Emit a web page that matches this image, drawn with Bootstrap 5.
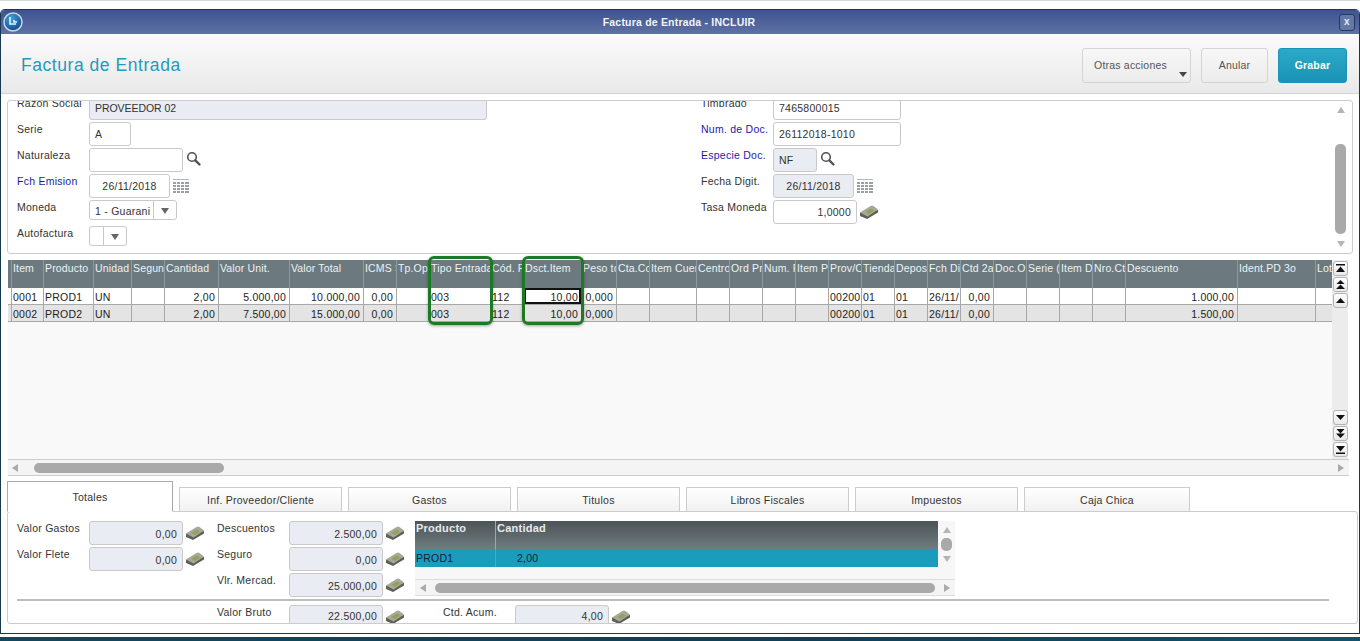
<!DOCTYPE html>
<html lang="es">
<head>
<meta charset="utf-8">
<title>Factura de Entrada</title>
<link href="https://cdn.jsdelivr.net/npm/bootstrap@5.3.0/dist/css/bootstrap.min.css" rel="stylesheet">
<style>
html,body{height:641px;overflow:hidden;background:#fff;margin:0}
body{font:10.5px/14px "Liberation Sans",Arial,sans-serif;color:#333;letter-spacing:.25px}
.topline{height:9px;background:#fff;border-top:1px solid #d4d9dc}
.win{height:625px;border:1px solid #16394f;border-top:1px solid #24364f;border-radius:5px 5px 0 0;overflow:hidden;background:#fff}
.ttl{height:24px;background:linear-gradient(#3d5290,#5f72a5);color:#f1f3f8;font-weight:700;font-size:10.5px;letter-spacing:.2px;padding:0 4px 0 2px}
.ttl-t{flex:1;text-align:center;padding-right:4px}
.xbtn{width:16px;height:17px;background:#6478a8;border:1px solid #26365c;border-radius:3px;color:#e8ebf2;font-size:10px;line-height:14px;text-align:center;font-weight:700}
.hdr{height:60px;background:linear-gradient(#fbfbfb,#e9e9e9);border-bottom:1px solid #d2d2d2;padding:14px 12px 0 20px}
.hdr-t{font-size:17.5px;line-height:35px;color:#1f9bbb;letter-spacing:.55px}
.hbtn{height:35px;font-size:10.5px;line-height:14px;padding:0 0 2px;color:#555;background:linear-gradient(#f7f7f7,#ececec);border:1px solid #d4d4d4;border-radius:3px;letter-spacing:.2px}
.hb1{width:109px;position:relative;padding-right:12px}
.hb1 i{position:absolute;right:3px;bottom:5px;border:4.5px solid transparent;border-top:5px solid #444;border-bottom:0}
.hb2{width:67px;margin-left:10px}
.hb3{width:69px;margin-left:10px;background:linear-gradient(#2ba9c8,#1a93b5);border-color:#1a93b5;color:#fff;font-weight:700}
.frm{height:154px;margin:6px 6px 0;border:1px solid #ccc;border-radius:3px;overflow:hidden}
.frm-in{flex:1;margin-top:-5px;padding-left:9px}
.fcol{width:684px;flex:none}
.fcol2{width:auto;flex:1}
.fr{height:26px}
.flb{width:72px;flex:none;white-space:nowrap}
.flb-b{color:#1c1ca8}
.bx.form-control{height:24px;min-height:0;padding:4px 5px 0;font-size:10.5px;line-height:14px;border:1px solid #c9c9c9;border-radius:3px;color:#333;background:#fff;white-space:nowrap}
.bx-d.form-control{background:#e9ecf2}
.bx-r{text-align:right}
.bx-c{text-align:center}
.w398{width:398px}.w42{width:42px}.w94{width:94px}.w81{width:81px}.w128{width:128px}.w44{width:44px}.w84{width:84px}
.caps{letter-spacing:-.05px}
.cmb{height:20px;border:1px solid #c9c9c9;border-radius:3px;align-items:stretch}
.cmb b{font-weight:400;width:64px;padding:3px 0 0 5px;white-space:nowrap;border-right:1px solid #c9c9c9}
.cmb-e b{width:14px;padding:0}
.cmb i{width:22px;position:relative;flex:none}
.cmb i::after{content:"";position:absolute;left:7px;top:7px;border:4px solid transparent;border-top:6px solid #666;border-bottom:0}
.ic{flex:none;margin-left:3px;display:block}
.ic-s{margin-top:3px}
.ic-m{margin-top:5px}
.ic-c{margin-top:5px}
.vs{width:11px;flex:none;margin-right:6px;padding:6px 0}
.up,.dn{width:0;height:0;border:4.5px solid transparent;flex:none}
.up{border-bottom:6px solid #b5b5b5;border-top:0}
.dn{border-top:6px solid #b5b5b5;border-bottom:0}
.th{width:11px;background:#a9a9a9;border-radius:5px}
.vs .th{flex:1;margin:31px 0 7px}
.grid{height:216px;margin:6px 0 0 7px;position:relative;flex:none}
.gwrap{width:1324px;overflow:hidden;background:#f9f9f9;height:199px}
table.gt{table-layout:fixed;width:1340px;margin:0;border-collapse:separate;border-spacing:0;font-size:10.5px;--bs-table-bg:transparent}
.gt.gt>*>tr>*{padding:0 0 0 1px;box-shadow:none;overflow:hidden;white-space:nowrap;border:0;border-right:1px solid #a8a8a8;border-bottom:1px solid #a8a8a8;line-height:14px;color:#222;background:#fff}
.gt.gt>thead>tr>th{height:28px;background:#6c7a80;color:#eef2f3;font-weight:400;letter-spacing:.15px;vertical-align:top;padding-top:1px;border-right:1px solid #8d999e;border-bottom:0}
.gt.gt>tbody>tr>td{height:17px;vertical-align:top;padding-top:2px}
.gt.gt>tbody>tr:nth-child(2)>td{background:#e4e4e4}
.gt.gt>tbody>tr>td.rt{text-align:right;padding:2px 3px 0 0}
.gt.gt>tbody>tr>td.sel{box-shadow:inset 0 0 0 2px #111;background:#fff}
.gvs{width:16px;background:#ececec;flex:none;height:199px;padding:1px}
.vb{display:block;width:15px;height:15px;padding:0;border:1px solid #b4b4b4;border-radius:3px;background:linear-gradient(#fff,#e8e8e8);margin-bottom:1px;line-height:0;flex:none}
.vb svg{display:block;margin:2px}
.ghs{height:17px;background:#f4f4f4;border-top:1px solid #ccc;border-bottom:1px solid #ccc;width:1341px;padding-left:4px}
.lf{border:4px solid transparent;border-right:6px solid #aaa;border-left:0}
.rg{border:4px solid transparent;border-left:6px solid #aaa;border-right:0}
.hth{height:10px;background:#a9a9a9;border-radius:5px}
.ghs .hth{width:190px;margin-left:16px}
.ghs .rg{margin:0 5px 0 auto}
.tabs{margin:5px 0 -1px 6px;height:31px;align-items:flex-end;position:relative;z-index:1;flex-wrap:nowrap}
.tabx{height:25px;width:163px;margin-right:6px;border:1px solid #ccc;background:linear-gradient(#fff,#f1f1f1);text-align:center;line-height:24px;color:#333;flex:none}
.tabx-a{height:31px;width:166px;border-color:#aaa;border-bottom-color:#fff;background:#fff;line-height:31px}
.tabx-l{width:166px}
.pan{height:113px;margin:0 1px 0 6px;border:1px solid #ccc;border-radius:3px;padding:9px 9px 0;overflow:hidden}
.tc{width:200px;flex:none}
.tc2{width:198px;flex:none}
.tr{height:26px}
.bx-t.form-control{width:94px;flex:none;padding-top:5px}
.bl .bx-t.form-control{padding-top:3px}
.mini{width:540px;height:75px;flex:none}
.mini-g{width:523px;height:58px;background:#f7f7f7}
.mh{height:28px;background:linear-gradient(#4d5356,#6e7c80);color:#e6e9ea;font-weight:700;font-size:11px}
.mh div,.mr div{padding-left:1px}
.mc1{width:81px;border-right:1px solid #9aa;flex:none}
.mr{height:18px;background:#1c9cbd;color:#123;line-height:18px}
.mr .mc1{border-right:1px solid #3fb0cb}
.mr .mv{padding-left:21px}
.mhs{height:17px;background:#f4f4f4;border-top:1px solid #ddd;border-bottom:1px solid #ddd;width:540px;padding:0 5px}
.mhs .hth{flex:1;margin:0 9px}
.mvs{width:17px;flex:none;padding:6px 3px 0;background:#f7f7f7;height:58px}
.mvs .th{height:13px;margin:5px 0;width:11px}
.sep{height:2px;background:#bdbdbd;margin:0 19px 4px 0}
.ctd{width:72px;flex:none;white-space:nowrap}
.bl{margin-left:200px}
.brk{margin-left:39px}
.frame{position:absolute;width:65px;height:69px;top:-4px;border:3px solid #1c7a24;border-radius:6px;box-shadow:0 1px 3px rgba(0,0,0,.35);pointer-events:none}
.f1{left:420px}.f2{left:514px;width:62px}
.dk{height:4px;margin-top:3px;background:linear-gradient(90deg,#12475e,#0e3f58 60%,#15516a)}
</style>
</head>
<body>
<svg width="0" height="0" class="position-absolute">
<symbol id="s" viewBox="0 0 16 16"><circle cx="6" cy="6" r="4.300" fill="none" stroke="#4d545a" stroke-width="1.600"/><path d="M9.300 9.300l4.200 4.200" stroke="#4d545a" stroke-width="2.400" stroke-linecap="round"/></symbol>
<symbol id="c" viewBox="0 0 16 14"><path d="M0 0h16v1H0z" fill="#b4b8bc"/><g fill="#9aa0a6"><path d="M0 3h3v2H0zM4 3h3v2H4zM8 3h3v2H8zM12 3h4v2h-4zM0 6h3v2H0zM4 6h3v2H4zM8 6h3v2H8zM12 6h4v2h-4zM0 9h3v2H0zM4 9h3v2H4zM8 9h3v2H8zM12 9h4v2h-4zM0 12h3v2H0zM4 12h3v2H4zM8 12h3v2H8zM12 12h4v2h-4z"/></g></symbol>
<symbol id="m" viewBox="0 0 18 14"><path d="M0 7.500V11l7 3 11-6.500V5z" fill="#5f5f55"/><path d="M0 7.500L10.500 1q1.500-1 3 0L18 4.500 7.500 11.500z" fill="#a9a898"/><path d="M5.500 7L10.500 3.500l3.500 2L9 9z" fill="#8fa25c"/></symbol>
</svg>
<div class="topline"></div>
<div class="win d-flex flex-column">
  <div class="ttl d-flex align-items-center">
    <svg width="20" height="20" viewBox="0 0 20 20"><defs><radialGradient id="gl" cx=".4" cy=".3" r=".8"><stop offset="0" stop-color="#3ea3dc"/><stop offset="1" stop-color="#0b3f7e"/></radialGradient></defs><circle cx="10" cy="10" r="9" fill="url(#gl)" stroke="#c7d6e6" stroke-width="1.500"/><path d="M7 5v7h6M11 8v2h3" stroke="#e6f2fb" stroke-width="1.600" fill="none"/></svg>
    <div class="ttl-t">Factura de Entrada - INCLUIR</div>
    <div class="xbtn">x</div>
  </div>
  <div class="hdr d-flex align-items-start">
    <div class="hdr-t flex-grow-1">Factura de Entrada</div>
    <button type="button" class="btn hbtn hb1">Otras acciones<i></i></button>
    <button type="button" class="btn hbtn hb2">Anular</button>
    <button type="button" class="btn hbtn hb3">Grabar</button>
  </div>
  <div class="frm d-flex">
    <div class="frm-in d-flex">
      <div class="fcol">
        <div class="fr d-flex"><div class="flb">Razon Social</div><div class="form-control bx bx-d w398 caps">PROVEEDOR 02</div></div>
        <div class="fr d-flex"><div class="flb">Serie</div><div class="form-control bx w42">A</div></div>
        <div class="fr d-flex"><div class="flb">Naturaleza</div><div class="form-control bx w94"></div><svg class="ic ic-s" width="16" height="16"><use href="#s"/></svg></div>
        <div class="fr d-flex"><div class="flb flb-b">Fch Emision</div><div class="form-control bx bx-c w81">26/11/2018</div><svg class="ic ic-c" width="16" height="14"><use href="#c"/></svg></div>
        <div class="fr d-flex"><div class="flb">Moneda</div><div class="cmb d-flex"><b>1 - Guarani</b><i></i></div></div>
        <div class="fr d-flex"><div class="flb">Autofactura</div><div class="cmb cmb-e d-flex"><b></b><i></i></div></div>
      </div>
      <div class="fcol fcol2">
        <div class="fr d-flex"><div class="flb">Timbrado</div><div class="form-control bx w128">7465800015</div></div>
        <div class="fr d-flex"><div class="flb flb-b">Num. de Doc.</div><div class="form-control bx w128">26112018-1010</div></div>
        <div class="fr d-flex"><div class="flb flb-b">Especie Doc.</div><div class="form-control bx bx-d w44">NF</div><svg class="ic ic-s" width="16" height="16"><use href="#s"/></svg></div>
        <div class="fr d-flex"><div class="flb">Fecha Digit.</div><div class="form-control bx bx-d bx-c w81">26/11/2018</div><svg class="ic ic-c" width="16" height="14"><use href="#c"/></svg></div>
        <div class="fr d-flex"><div class="flb">Tasa Moneda</div><div class="form-control bx bx-r w84">1,0000</div><svg class="ic ic-m" width="18" height="14"><use href="#m"/></svg></div>
      </div>
    </div>
    <div class="vs d-flex flex-column align-items-center">
      <div class="up"></div><div class="th"></div><div class="dn"></div>
    </div>
  </div>
  <div class="grid">
    <div class="d-flex">
      <div class="gwrap">
        <table class="table gt">
          <colgroup><col width="4"><col width="32"><col width="50"><col width="38"><col width="33"><col width="54"><col width="71"><col width="74"><col width="33"><col width="33"><col width="61"><col width="33"><col width="58"><col width="35"><col width="33"><col width="47"><col width="33"><col width="33"><col width="33"><col width="33"><col width="33"><col width="33"><col width="33"><col width="33"><col width="33"><col width="33"><col width="33"><col width="33"><col width="33"><col width="112"><col width="78"><col width="32"></colgroup>
          <thead><tr><th></th><th>Item</th><th>Producto</th><th>Unidad</th><th>Segun</th><th>Cantidad</th><th>Valor Unit.</th><th>Valor Total</th><th>ICMS S</th><th>Tp.Op</th><th>Tipo Entrada</th><th>Cód. F</th><th>Dsct.Item</th><th>Peso to</th><th>Cta.Co</th><th>Item Cuen</th><th>Centro</th><th>Ord Pr</th><th>Num. F</th><th>Item Pe</th><th>Prov/C</th><th>Tienda</th><th>Depos</th><th>Fch Di</th><th>Ctd 2a</th><th>Doc.O</th><th>Serie (</th><th>Item De</th><th>Nro.Ct</th><th>Descuento</th><th>Ident.PD 3o</th><th>Lot</th></tr></thead>
          <tbody>
            <tr><td></td><td>0001</td><td>PROD1</td><td>UN</td><td></td><td class="rt">2,00</td><td class="rt">5.000,00</td><td class="rt">10.000,00</td><td class="rt">0,00</td><td></td><td>003</td><td>112</td><td class="rt sel">10,00</td><td class="rt">0,000</td><td></td><td></td><td></td><td></td><td></td><td></td><td>00200</td><td>01</td><td>01</td><td>26/11/</td><td class="rt">0,00</td><td></td><td></td><td></td><td></td><td class="rt">1.000,00</td><td></td><td></td></tr>
            <tr><td></td><td>0002</td><td>PROD2</td><td>UN</td><td></td><td class="rt">2,00</td><td class="rt">7.500,00</td><td class="rt">15.000,00</td><td class="rt">0,00</td><td></td><td>003</td><td>112</td><td class="rt">10,00</td><td class="rt">0,000</td><td></td><td></td><td></td><td></td><td></td><td></td><td>00200</td><td>01</td><td>01</td><td>26/11/</td><td class="rt">0,00</td><td></td><td></td><td></td><td></td><td class="rt">1.500,00</td><td></td><td></td></tr>
          </tbody>
        </table>
      </div>
      <div class="gvs d-flex flex-column">
        <button type="button" class="vb" aria-label="Inicio"><svg width="9" height="9" viewBox="0 0 9 9"><path d="M0 0h9v1.500H0zM4.500 2.500L9 8H0z" fill="#111"/></svg></button>
        <button type="button" class="vb" aria-label="Pagina arriba"><svg width="9" height="9" viewBox="0 0 9 9"><path d="M4.500 0L8.500 4H.5zM4.500 4.500L9 9H0z" fill="#111"/></svg></button>
        <button type="button" class="vb" aria-label="Arriba"><svg width="9" height="9" viewBox="0 0 9 9"><path d="M4.500 2L9 7H0z" fill="#111"/></svg></button>
        <div class="flex-grow-1"></div>
        <button type="button" class="vb" aria-label="Abajo"><svg width="9" height="9" viewBox="0 0 9 9"><path d="M4.500 7L9 2H0z" fill="#111"/></svg></button>
        <button type="button" class="vb" aria-label="Pagina abajo"><svg width="9" height="9" viewBox="0 0 9 9"><path d="M4.500 4.500L.5 0h8zM4.500 9L0 4.500h9z" fill="#111"/></svg></button>
        <button type="button" class="vb" aria-label="Fin"><svg width="9" height="9" viewBox="0 0 9 9"><path d="M4.500 6.500L0 1h9zM0 7.500h9V9H0z" fill="#111"/></svg></button>
      </div>
    </div>
    <div class="ghs d-flex align-items-center"><div class="lf"></div><div class="hth"></div><div class="rg"></div></div>
    <div class="frame f1"></div>
    <div class="frame f2"></div>
  </div>
  <div class="nav tabs">
    <div class="tabx tabx-a">Totales</div>
    <div class="tabx">Inf. Proveedor/Cliente</div>
    <div class="tabx">Gastos</div>
    <div class="tabx">Titulos</div>
    <div class="tabx">Libros Fiscales</div>
    <div class="tabx">Impuestos</div>
    <div class="tabx tabx-l">Caja Chica</div>
  </div>
  <div class="pan">
    <div class="d-flex">
      <div class="tc">
        <div class="tr d-flex"><div class="flb">Valor Gastos</div><div class="form-control bx bx-d bx-r bx-t">0,00</div><svg class="ic ic-m" width="18" height="14"><use href="#m"/></svg></div>
        <div class="tr d-flex"><div class="flb">Valor Flete</div><div class="form-control bx bx-d bx-r bx-t">0,00</div><svg class="ic ic-m" width="18" height="14"><use href="#m"/></svg></div>
      </div>
      <div class="tc2">
        <div class="tr d-flex"><div class="flb">Descuentos</div><div class="form-control bx bx-d bx-r bx-t">2.500,00</div><svg class="ic ic-m" width="18" height="14"><use href="#m"/></svg></div>
        <div class="tr d-flex"><div class="flb">Seguro</div><div class="form-control bx bx-d bx-r bx-t">0,00</div><svg class="ic ic-m" width="18" height="14"><use href="#m"/></svg></div>
        <div class="tr d-flex"><div class="flb">Vlr. Mercad.</div><div class="form-control bx bx-d bx-r bx-t">25.000,00</div><svg class="ic ic-m" width="18" height="14"><use href="#m"/></svg></div>
      </div>
      <div class="mini">
        <div class="d-flex">
          <div class="mini-g">
            <div class="mh d-flex"><div class="mc1">Producto</div><div>Cantidad</div></div>
            <div class="mr d-flex"><div class="mc1">PROD1</div><div class="mv">2,00</div></div>
          </div>
          <div class="mvs d-flex flex-column align-items-center"><div class="up"></div><div class="th"></div><div class="dn"></div></div>
        </div>
        <div class="mhs d-flex align-items-center"><div class="lf"></div><div class="hth"></div><div class="rg"></div></div>
      </div>
    </div>
    <div class="sep"></div>
    <div class="d-flex bl">
      <div class="flb">Valor Bruto</div><div class="form-control bx bx-d bx-r bx-t">22.500,00</div><svg class="ic ic-m" width="18" height="14"><use href="#m"/></svg>
      <div class="ctd brk">Ctd. Acum.</div><div class="form-control bx bx-d bx-r bx-t">4,00</div><svg class="ic ic-m" width="18" height="14"><use href="#m"/></svg>
    </div>
  </div>
</div>
<div class="dk"></div>
</body>
</html>
